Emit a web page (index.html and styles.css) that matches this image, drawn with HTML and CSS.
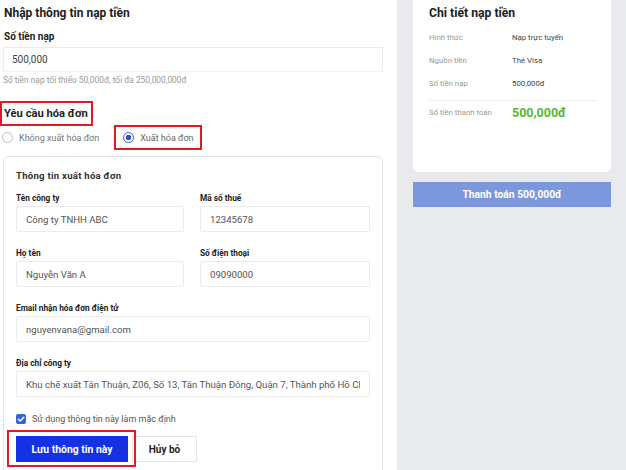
FILE: index.html
```html
<!DOCTYPE html>
<html lang="vi">
<head>
<meta charset="utf-8">
<link rel="stylesheet" href="styles.css">
</head>
<body>
<div class="page">
  <main class="main">
    <h1 class="title">Nhập thông tin nạp tiền</h1>
    <label class="amount-label" for="amount">Số tiền nạp</label>
    <input class="amount-input" id="amount" value="500,000" readonly>
    <p class="hint">Số tiền nạp tối thiểu 50,000đ, tối đa 250,000,000đ</p>
    <h2 class="invoice-title">Yêu cầu hóa đơn</h2>
    <div class="radios">
      <label class="radio"><span class="circle"></span>Không xuất hóa đơn</label>
      <label class="radio radio-on"><span class="circle"></span>Xuất hóa đơn</label>
    </div>
    <section class="card">
      <h3 class="card-title">Thông tin xuất hóa đơn</h3>
      <div class="grid">
        <div class="field">
          <div class="field-label">Tên công ty</div>
          <input class="field-input" value="Công ty TNHH ABC" readonly>
        </div>
        <div class="field">
          <div class="field-label">Mã số thuế</div>
          <input class="field-input" value="12345678" readonly>
        </div>
        <div class="field">
          <div class="field-label">Họ tên</div>
          <input class="field-input" value="Nguyễn Văn A" readonly>
        </div>
        <div class="field">
          <div class="field-label">Số điện thoại</div>
          <input class="field-input" value="09090000" readonly>
        </div>
        <div class="field wide">
          <div class="field-label">Email nhận hóa đơn điện tử</div>
          <input class="field-input" value="nguyenvana@gmail.com" readonly>
        </div>
        <div class="field wide">
          <div class="field-label">Địa chỉ công ty</div>
          <input class="field-input" value="Khu chế xuất Tân Thuận, Z06, Số 13, Tân Thuận Đông, Quận 7, Thành phố Hồ Chí Minh" readonly>
        </div>
      </div>
      <label class="check">
        <span class="box"><svg viewBox="0 0 10 10" width="10" height="10"><path d="M2.3 5.2 L4.2 7 L7.8 3.2" fill="none" stroke="#fff" stroke-width="1.4" stroke-linecap="round" stroke-linejoin="round"/></svg></span>
        Sử dụng thông tin này làm mặc định
      </label>
      <div class="actions">
        <button class="btn-save">Lưu thông tin này</button>
        <button class="btn-cancel">Hủy bỏ</button>
      </div>
    </section>
  </main>
  <aside class="side">
    <section class="detail">
      <h2 class="detail-title">Chi tiết nạp tiền</h2>
      <div class="row"><span class="k">Hình thức</span><span class="v">Nạp trực tuyến</span></div>
      <div class="row"><span class="k">Nguồn tiền</span><span class="v">Thẻ Visa</span></div>
      <div class="row"><span class="k">Số tiền nạp</span><span class="v">500,000đ</span></div>
      <div class="row total"><span class="k">Số tiền thanh toán</span><span class="v">500,000đ</span></div>
    </section>
    <button class="pay">Thanh toán 500,000đ</button>
  </aside>
</div>
</body>
</html>
```

FILE: styles.css
```css
* { box-sizing: border-box; }
html, body { margin: 0; padding: 0; }
body {
  font-family: "Roboto", "Noto Sans", sans-serif;
  background: #e9eaee;
  color: #222;
}
.page {
  display: flex;
  height: 470px;
  overflow: hidden;
}
.main {
  width: 397px;
  flex: none;
  background: #fff;
  padding: 4px 14px 0 3px;
}
.title {
  margin: 0 0 0 1px;
  font-size: 12px;
  line-height: 18px;
  font-weight: 700;
  color: #1d1d1d;
}
.amount-label {
  display: block;
  margin: 7px 0 0 1px;
  font-size: 10px;
  line-height: 16px;
  font-weight: 700;
  color: #222;
}
.amount-input {
  display: block;
  width: 100%;
  margin: 2px 0 0 0;
  height: 25px;
  border: 1px solid #ececec;
  border-bottom-color: #f3f3f3;
  padding: 0 0 0 8px;
  font-family: inherit;
  font-size: 10px;
  color: #444;
  background: #fff;
  outline: none;
}
.hint {
  margin: 2px 0 0 0;
  font-size: 8.4px;
  line-height: 12px;
  color: #9a9a9a;
}
.invoice-title {
  margin: 15px 0 0 -3px;
  width: fit-content;
  height: 25px;
  border: 2px solid #e21b23;
  padding: 0 3px 0 2px;
  font-size: 11.2px;
  line-height: 21px;
  font-weight: 700;
  color: #1d1d1d;
  white-space: nowrap;
}
.radios {
  display: flex;
  align-items: center;
  margin: -1px 0 0 -1px;
  height: 25px;
}
.radio {
  display: flex;
  align-items: center;
  font-size: 9px;
  color: #777;
  height: 25px;
  white-space: nowrap;
}
.circle {
  width: 11px;
  height: 11px;
  border: 1px solid #bdbdbd;
  border-radius: 50%;
  margin-right: 6px;
  flex: none;
}
.radio-on {
  margin-left: 15px;
  width: 88px;
  border: 2px solid #e21b23;
  padding-left: 7px;
  color: #666;
}
.radio-on .circle {
  border-color: #3a5bd9;
  background: radial-gradient(circle, #2f4fd4 0 2.6px, #fff 3px);
}
.card {
  margin-top: 6px;
  width: 380px;
  border: 1px solid #e3e3e3;
  border-radius: 6px;
  padding: 12px 12px 20px 12px;
}
.card-title {
  margin: 0;
  font-size: 9.6px;
  line-height: 14px;
  font-weight: 700;
  color: #333;
  letter-spacing: 0.25px;
}
.grid {
  margin-top: 9px;
  display: grid;
  grid-template-columns: 168px 170px;
  column-gap: 16px;
  row-gap: 15px;
}
.wide { grid-column: 1 / -1; }
.field-label {
  font-size: 8.3px;
  line-height: 12px;
  font-weight: 700;
  color: #222;
  margin-bottom: 2px;
}
.field-input {
  display: block;
  width: 100%;
  height: 26px;
  margin: 0;
  border: 1px solid #ececec;
  border-radius: 2px;
  padding: 0 9px;
  font-family: inherit;
  font-size: 9.6px;
  color: #555;
  background: #fff;
  outline: none;
}
.check {
  margin-top: 15px;
  height: 14px;
  display: flex;
  align-items: center;
  font-size: 9px;
  color: #555;
}
.box {
  width: 10px;
  height: 10px;
  border-radius: 2px;
  background: #3266d6;
  margin-right: 6px;
  display: flex;
}
.actions {
  margin-top: 10px;
  display: flex;
  gap: 4px;
  position: relative;
}
.actions::before {
  content: "";
  position: absolute;
  left: -9px;
  top: -6px;
  width: 125px;
  height: 33px;
  border: 2px solid #e21b23;
}
.btn-save, .btn-cancel, .pay {
  font-family: inherit;
  font-weight: 700;
  cursor: pointer;
  padding: 0;
}
.btn-save {
  width: 112px;
  height: 26px;
  border: none;
  background: #1531e4;
  color: #fff;
  font-size: 10.4px;
}
.btn-cancel {
  width: 65px;
  height: 26px;
  border: 1px solid #e5e5e5;
  background: #fff;
  color: #222;
  font-size: 10px;
}
.side {
  flex: 1;
  padding: 0 15px 0 16px;
}
.detail {
  height: 172px;
  background: #fff;
  border-radius: 0 0 6px 6px;
  padding: 4px 14px 0 16px;
}
.detail-title {
  margin: 0;
  font-size: 12.2px;
  line-height: 18px;
  font-weight: 700;
  color: #1d1d1d;
}
.row {
  display: flex;
  align-items: center;
  height: 23px;
  font-size: 7.8px;
}
.detail-title + .row { margin-top: 4px; }
.k { width: 83px; color: #999; flex: none; }
.v { color: #444; }
.total {
  margin-top: 5px;
  border-top: 1px solid #eeeeee;
  height: 23px;
}
.total .v {
  font-size: 12.5px;
  font-weight: 700;
  color: #5cb536;
}
.pay {
  display: block;
  margin-top: 10px;
  width: 100%;
  height: 25px;
  border: none;
  background: #7d97dc;
  color: #fff;
  font-size: 10.3px;
}
```
